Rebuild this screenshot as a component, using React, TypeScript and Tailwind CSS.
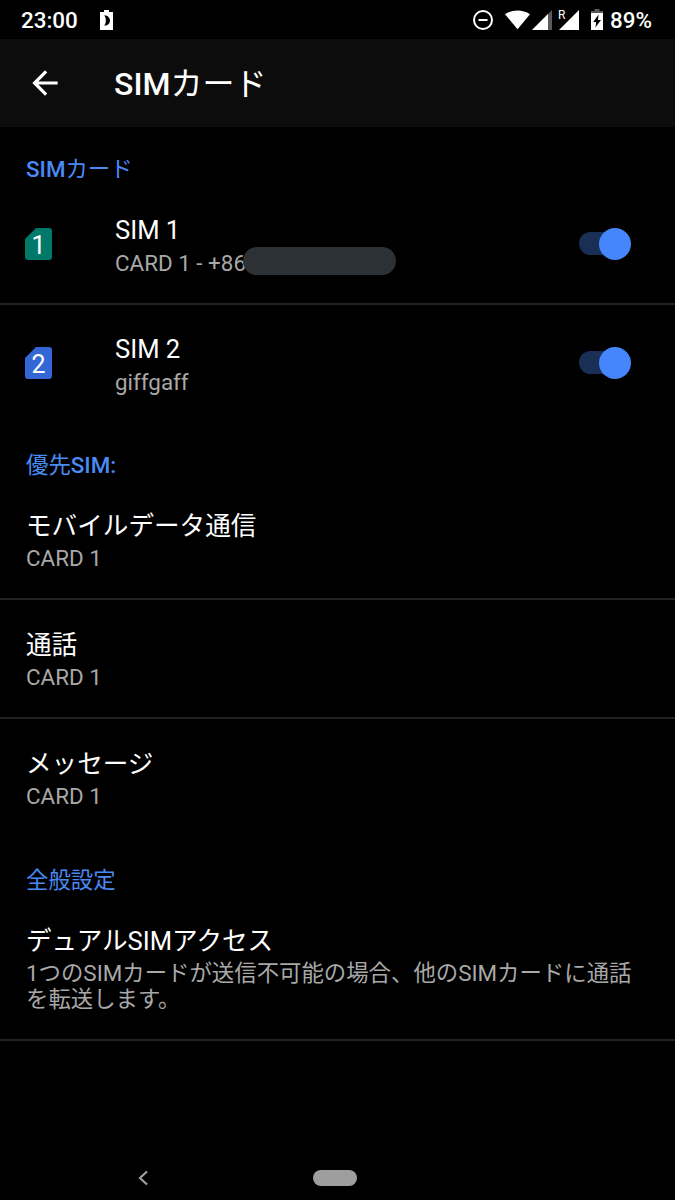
import React from "react";

interface SwitchRowProps {
  slot: number;
  title: string;
  iconClassName: string;
  children: React.ReactNode;
}

interface PreferenceProps {
  title: string;
  summary: string;
  className?: string;
}

const StatusBar: React.FC = () => (
  <div className="flex h-[39px] items-center pl-[21px] pr-[23px] text-[22.4px] leading-[39px] font-medium">
    <span className="pt-px">23:00</span>
    <svg className="ml-[22px] h-5 w-[13px]" viewBox="0 0 13 20">
      <path
        fill="currentColor"
        fillRule="evenodd"
        d="M4 0h5v2h4v18H0V2h4zM4 5.5c2.500 1.500 2.500 8.500 0 10c3 .6 6-1.500 6-5s-3-5.600-6-5z"
      />
    </svg>

    <div className="ml-auto flex items-center">
      <svg className="h-5 w-5" viewBox="0 0 20 20" fill="none" stroke="currentColor" strokeWidth="2">
        <circle cx="10" cy="10" r="9" />
        <path d="M5.500 10h9" />
      </svg>
      <svg className="ml-[12px] h-5 w-[25px]" viewBox="0 0 25 20">
        <path fill="currentColor" d="M12.500 19.200L0 4.200C7.500-.8 17.500-.8 25 4.200z" />
      </svg>
      <svg className="ml-[2px] h-5 w-5" viewBox="0 0 20 20">
        <path fill="#5a5a5a" d="M20 0v20H0z" />
        <path fill="currentColor" d="M16 4v16H0z" />
      </svg>
      <div className="relative ml-[7px] h-5 w-5">
        <svg className="h-5 w-5" viewBox="0 0 20 20">
          <path fill="currentColor" d="M20 0v20H0z" />
        </svg>
        <span className="absolute -left-px -top-px text-[12px] leading-[12px] font-normal">R</span>
      </div>
      <svg className="ml-[12px] h-[21px] w-3" viewBox="0 0 12 21">
        <path fill="#5a5a5a" d="M3.500 0h5v2H12v3H0V2h3.500z" />
        <path
          fill="currentColor"
          fillRule="evenodd"
          d="M0 4h12v17H0zM7.600 5.500L2.200 13h3l-.8 5.500L10 11H6.900z"
        />
      </svg>
      <span className="ml-[7px] pt-px">89%</span>
    </div>
  </div>
);

const Toolbar: React.FC = () => (
  <div className="flex h-22 items-center bg-[#0c0c0c] pl-[26px]">
    <svg className="h-[38px] w-[38px]" viewBox="0 0 24 24" fill="currentColor">
      <path d="M20 11H7.830l5.590-5.590L12 4l-8 8 8 8 1.410-1.410L7.830 13H20v-2z" />
    </svg>
    <h1 className="ml-[50px] pt-px text-[32px] leading-[40px] font-medium">
      SIM<span className="font-normal">カード</span>
    </h1>
  </div>
);

const Category: React.FC<{ children: React.ReactNode }> = ({ children }) => (
  <h2 className="h-[58px] pl-[26px] pt-[28px] text-[22.4px] leading-[29px] text-[#4a8af4]">
    {children}
  </h2>
);

const SwitchRow: React.FC<SwitchRowProps> = ({ slot, title, iconClassName, children }) => (
  <div className="flex h-[119px] items-center pb-[2px] pl-[25px] pr-[44px]">
    <div className={`relative h-8 w-[27px] ${iconClassName}`}>
      <svg className="h-8 w-[27px]" viewBox="0 0 27 32" fill="currentColor">
        <path d="M11 0h13a3 3 0 0 1 3 3v26a3 3 0 0 1-3 3H3a3 3 0 0 1-3-3V11z" />
      </svg>
      <span className="absolute inset-0 text-center text-[25px] leading-[35px] text-white">
        {slot}
      </span>
    </div>
    <div className="ml-[63px] pt-[4px]">
      <div className="text-[25.6px] leading-[34px]">{title}</div>
      <div className="flex items-center text-[22.4px] leading-[32px] text-[#a8a8a8]">{children}</div>
    </div>
    <div className="ml-auto flex h-8 w-[52px] items-center">
      <div className="h-[23px] w-9 rounded-full bg-[#1a2f55]" />
      <div className="-ml-4 h-8 w-8 shrink-0 rounded-full bg-[#4686fc]" />
    </div>
  </div>
);

const Preference: React.FC<PreferenceProps> = ({ title, summary, className = "h-[119px]" }) => (
  <div className={`px-[26px] pt-[28px] ${className}`}>
    <div className="text-[25.6px] leading-[34px]">{title}</div>
    <div className="pt-[2px] text-[22.4px] leading-[26px] text-[#a8a8a8]">{summary}</div>
  </div>
);

export default function App() {
  return (
    <div className="flex h-[1200px] w-[675px] flex-col overflow-hidden bg-black font-['Roboto','Noto_Sans_CJK_JP',sans-serif] text-white">
      <StatusBar />
      <Toolbar />

      <Category>
        <span className="font-medium">SIM</span>カード
      </Category>
      <SwitchRow slot={1} title="SIM 1" iconClassName="text-[#00796b]">
        <span>CARD 1 - +86</span>
        <span className="-ml-[3px] -mt-[4px] h-[28px] w-[153px] rounded-full bg-[#2c3135]" />
      </SwitchRow>
      <div className="-mt-px -mb-px h-[2px] bg-[#222222]" />
      <SwitchRow slot={2} title="SIM 2" iconClassName="text-[#3367d6]">
        giffgaff
      </SwitchRow>

      <Category>
        優先<span className="font-medium">SIM:</span>
      </Category>
      <Preference title="モバイルデータ通信" summary="CARD 1" />
      <div className="-mt-[2px] h-[2px] bg-[#222222]" />
      <Preference title="通話" summary="CARD 1" />
      <div className="-mt-[2px] h-[2px] bg-[#222222]" />
      <Preference title="メッセージ" summary="CARD 1" />

      <Category>全般設定</Category>
      <Preference
        title="デュアルSIMアクセス"
        summary="1つのSIMカードが送信不可能の場合、他のSIMカードに通話を転送します。"
        className="h-[145px]"
      />
      <div className="-mt-[2px] h-[2px] bg-[#222222]" />

      <div className="mt-auto flex h-11 items-center pl-[138px]">
        <svg className="h-4 w-[10px]" viewBox="0 0 10 16" fill="none" stroke="#9e9e9e" strokeWidth="2.200">
          <path d="M9 1.500L2 8l7 6.500" />
        </svg>
        <div className="ml-[165px] h-4 w-11 rounded-full bg-[#9e9e9e]" />
      </div>
    </div>
  );
}
